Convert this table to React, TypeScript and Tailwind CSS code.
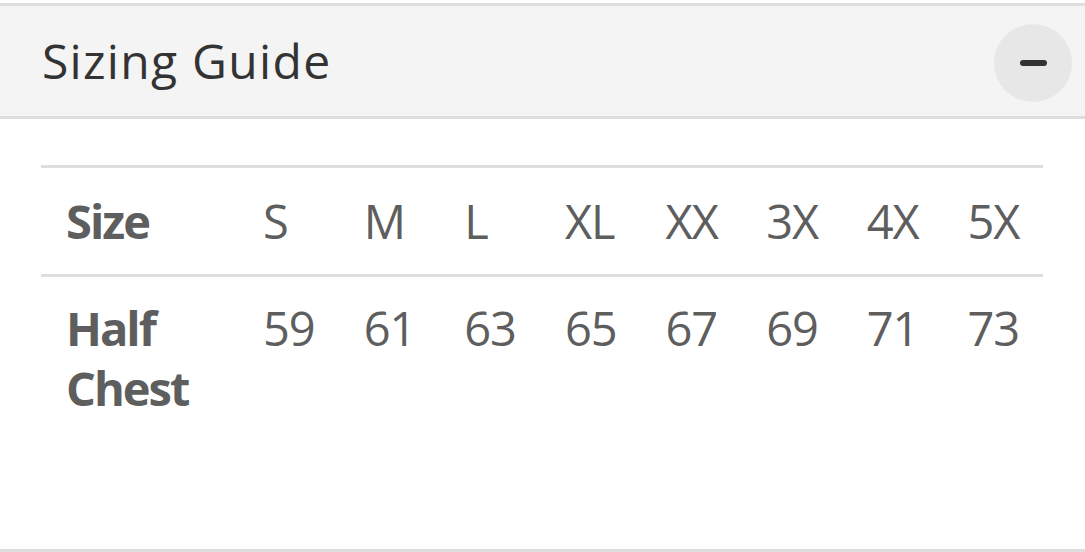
import React from "react";

const SIZES = ["S", "M", "L", "XL", "XX", "3X", "4X", "5X"];
const HALF_CHEST = [59, 61, 63, 65, 67, 69, 71, 73];

export default function App() {
  return (
    <div className="w-[1085px] h-[552px] bg-white pt-[3px] font-['Open_Sans',sans-serif] overflow-hidden">
      {/* Accordion header */}
      <div className="h-[116px] bg-[#f4f4f4] border-y-[3px] border-[#dedede] flex items-center justify-between pl-[42px] pr-[13px]">
        <h2 className="text-[48px] leading-[60px] tracking-[1.3px] text-[#333333] font-normal">Sizing Guide</h2>
        <button className="w-[78px] h-[78px] rounded-full bg-[#e7e7e7] flex items-center justify-center mt-[3px]">
          <span className="block w-[27px] h-[6px] rounded-full bg-[#333333]" />
        </button>
      </div>

      {/* Accordion body */}
      <div className="h-[433px] border-b-[3px] border-[#dedede] pt-[46px] px-[41px]">
        <table className="w-[1002px] table-fixed border-collapse text-[#5e5e5e] text-[47px] leading-[60px] tracking-[-1px]">
          <colgroup>
            <col className="w-[197px]" />
            {SIZES.map((s) => (
              <col key={s} />
            ))}
          </colgroup>
          <tbody>
            <tr className="border-y-[3px] border-[#dedede]">
              <td className="pl-[25px] py-[23px] font-bold tracking-[-2px]">Size</td>
              {SIZES.map((s) => (
                <td key={s} className="pl-[25px] py-[23px]">
                  {s}
                </td>
              ))}
            </tr>
            <tr>
              <td className="pl-[25px] pt-[21px] font-bold tracking-[-2px] align-top">Half Chest</td>
              {HALF_CHEST.map((n) => (
                <td key={n} className="pl-[25px] pt-[21px] align-top">
                  {n}
                </td>
              ))}
            </tr>
          </tbody>
        </table>
      </div>
    </div>
  );
}
